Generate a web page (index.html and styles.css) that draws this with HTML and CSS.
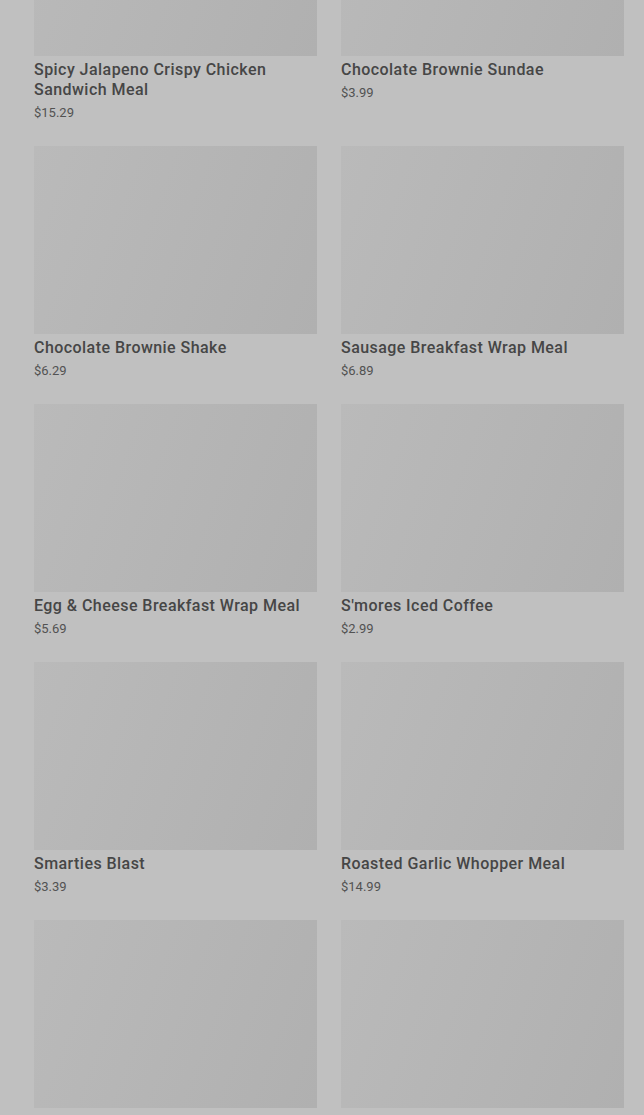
FILE: index.html
```html
<!DOCTYPE html>
<html lang="en">
<head>
  <meta charset="UTF-8">
  <title>Menu</title>
  <link rel="stylesheet" href="styles.css">
</head>
<body>
  <div class="menu-grid">
    <div class="item">
      <div class="thumb"></div>
      <div class="name">Spicy Jalapeno Crispy Chicken Sandwich Meal</div>
      <div class="price">$15.29</div>
    </div>
    <div class="item">
      <div class="thumb"></div>
      <div class="name">Chocolate Brownie Sundae</div>
      <div class="price">$3.99</div>
    </div>
    <div class="item">
      <div class="thumb"></div>
      <div class="name">Chocolate Brownie Shake</div>
      <div class="price">$6.29</div>
    </div>
    <div class="item">
      <div class="thumb"></div>
      <div class="name">Sausage Breakfast Wrap Meal</div>
      <div class="price">$6.89</div>
    </div>
    <div class="item">
      <div class="thumb"></div>
      <div class="name">Egg &amp; Cheese Breakfast Wrap Meal</div>
      <div class="price">$5.69</div>
    </div>
    <div class="item">
      <div class="thumb"></div>
      <div class="name">S'mores Iced Coffee</div>
      <div class="price">$2.99</div>
    </div>
    <div class="item">
      <div class="thumb"></div>
      <div class="name">Smarties Blast</div>
      <div class="price">$3.39</div>
    </div>
    <div class="item">
      <div class="thumb"></div>
      <div class="name">Roasted Garlic Whopper Meal</div>
      <div class="price">$14.99</div>
    </div>
    <div class="item">
      <div class="thumb"></div>
      <div class="name">Bacon Double Cheeseburger Meal</div>
      <div class="price">$10.49</div>
    </div>
    <div class="item">
      <div class="thumb"></div>
      <div class="name">Chicken Nuggets 10 Piece Meal</div>
      <div class="price">$9.99</div>
    </div>
  </div>
</body>
</html>
```

FILE: styles.css
```css
body {
  margin: 0;
  background: #c0c0c0;
  font-family: Roboto, "Liberation Sans", sans-serif;
  color: #464646;
  height: 1115px;
  overflow: hidden;
}
.menu-grid {
  display: grid;
  grid-template-columns: 283px 283px;
  column-gap: 24px;
  row-gap: 24px;
  padding: 0 20px 0 34px;
  margin-top: -132px;
}
.thumb {
  height: 188px;
  background: linear-gradient(110deg, #bababa 0%, #b5b5b5 50%, #b0b0b0 100%);
}
.name {
  font-size: 16px;
  font-weight: 500;
  line-height: 20px;
  letter-spacing: 0.45px;
  padding-top: 4px;
}
.price {
  font-size: 13px;
  line-height: 18px;
  margin-top: 4px;
  color: #525252;
}
```
